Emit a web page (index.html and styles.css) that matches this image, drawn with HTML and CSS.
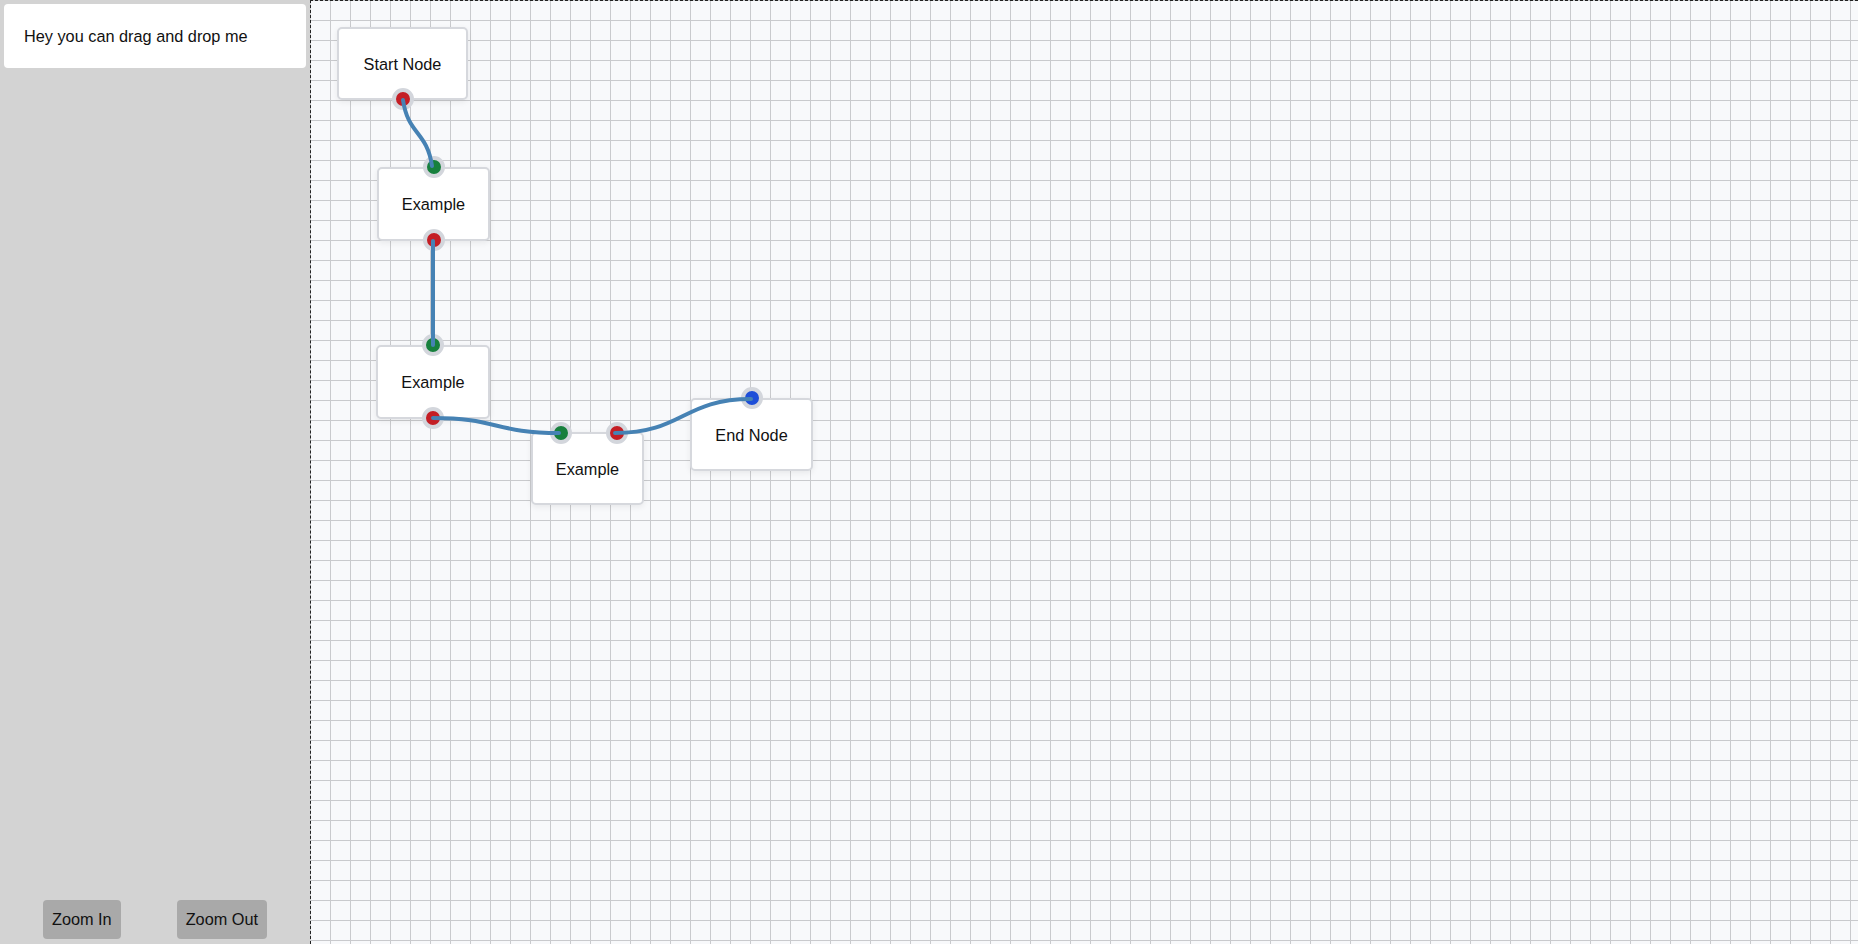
FILE: index.html
```html
<!DOCTYPE html>
<html>
<head>
<meta charset="utf-8">
<title>Flow editor</title>
<link rel="stylesheet" href="styles.css">
</head>
<body>
<div class="app">
  <aside class="sidebar">
    <div class="drag-card">Hey you can drag and drop me</div>
    <div class="zoom-bar">
      <button class="zoom-btn">Zoom In</button>
      <button class="zoom-btn">Zoom Out</button>
    </div>
  </aside>
  <main class="canvas">
    <div class="node node-start">Start Node<span class="port port-out port-bottom"></span></div>
    <div class="node node-ex1"><span class="port port-in port-top"></span>Example<span class="port port-out port-bottom"></span></div>
    <div class="node node-ex2"><span class="port port-in port-top"></span>Example<span class="port port-out port-bottom"></span></div>
    <div class="node node-ex3"><span class="port port-in port-top-a"></span><span class="port port-out port-top-b"></span>Example</div>
    <div class="node node-end"><span class="port port-end port-top"></span>End Node</div>
    <svg class="edges" width="1547" height="943" viewBox="0 0 1547 943">
      <path d="M92,99 C97,134 116,130 121,165"/>
      <path d="M122,240 L122,344"/>
      <path d="M122,417 C185,417 185,432 248,432"/>
      <path d="M304,432 C372,432 372,398 440,398"/>
    </svg>
  </main>
</div>
</body>
</html>
```
FILE: styles.css
```css
html, body {
  margin: 0;
  padding: 0;
  height: 100%;
}
body {
  font-family: "Liberation Sans", Arial, sans-serif;
  font-size: 16.3px;
  color: #111;
}
.app {
  display: flex;
  height: 944px;
  overflow: hidden;
}
.sidebar {
  width: 310px;
  flex: none;
  background: #d3d3d3;
  display: flex;
  flex-direction: column;
  justify-content: space-between;
}
.drag-card {
  margin: 4px;
  height: 64px;
  box-sizing: border-box;
  padding: 1px 20px 0;
  display: flex;
  align-items: center;
  background: #fff;
  border-radius: 4px;
}
.zoom-bar {
  display: flex;
  justify-content: center;
  gap: 56px;
  margin-bottom: 5px;
}
.zoom-btn {
  height: 39px;
  padding: 0 9px;
  border: none;
  border-radius: 4px;
  background: #a9a9a9;
  color: #111;
  font-family: inherit;
  font-size: 16.3px;
}
.canvas {
  flex: 1;
  position: relative;
  border-left: 1px dashed #222;
  border-top: 1px dashed #222;
  background-color: #f8f9fb;
  background-image:
    linear-gradient(to right, transparent 19px, #c9cacd 19px),
    linear-gradient(to bottom, transparent 19px, #c9cacd 19px);
  background-size: 20px 20px;
  overflow: hidden;
}
.node {
  position: absolute;
  box-sizing: border-box;
  padding-top: 1px;
  background: #fff;
  border: 2px solid #d6d8dd;
  border-radius: 5px;
  box-shadow: 0 2px 6px rgba(0, 0, 0, 0.07);
  display: flex;
  align-items: center;
  justify-content: center;
}
.node-start { left: 26px; top: 26px; width: 131px; height: 73px; }
.node-ex1 { left: 66px; top: 166px; width: 113px; height: 74px; }
.node-ex2 { left: 65px; top: 344px; width: 114px; height: 74px; }
.node-ex3 { left: 220px; top: 431px; width: 113px; height: 73px; }
.node-end { left: 379px; top: 397px; width: 123px; height: 73px; }
.port {
  position: absolute;
  width: 14px;
  height: 14px;
  border: 4px solid #d3d6dc;
  border-radius: 50%;
  transform: translate(-50%, -50%);
}
.port-out { background: #c41e25; }
.port-in { background: #17803d; }
.port-end { background: #1d4ed8; }
.port-bottom { left: 50%; top: calc(100% + 1px); }
.port-top { left: 50%; top: -2px; }
.port-top-a { left: 28px; top: -1px; }
.port-top-b { left: 84px; top: -1px; }
.edges {
  position: absolute;
  left: 0;
  top: 0;
  pointer-events: none;
}
.edges path {
  fill: none;
  stroke: #4682b4;
  stroke-width: 4;
  stroke-linecap: round;
}
```
